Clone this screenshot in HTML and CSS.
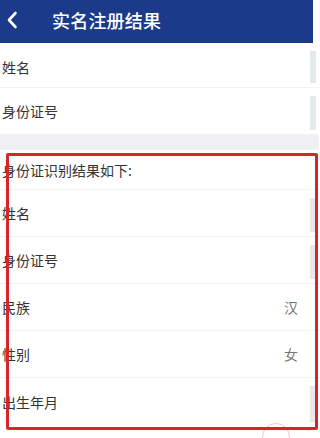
FILE: index.html
```html
<!DOCTYPE html>
<html lang="zh">
<head>
<meta charset="utf-8">
<link rel="stylesheet" href="styles.css">
</head>
<body>
<div class="page">
  <header class="bar">
    <svg class="back" width="12" height="18" viewBox="0 0 12 18"><path d="M9.5 2 L3 9 L9.5 16" fill="none" stroke="#fff" stroke-width="2.6" stroke-linecap="round" stroke-linejoin="round"/></svg>
    <span class="title">实名注册结果</span>
  </header>
  <div class="list top">
    <div class="row r1 edge"><span class="label">姓名</span></div>
    <div class="row r2 edge"><span class="label">身份证号</span></div>
  </div>
  <div class="gap"></div>
  <div class="list result">
    <div class="row head"><span class="label">身份证识别结果如下:</span></div>
    <div class="row edge"><span class="label">姓名</span></div>
    <div class="row edge"><span class="label">身份证号</span></div>
    <div class="row"><span class="label">民族</span><span class="value">汉</span></div>
    <div class="row"><span class="label">性别</span><span class="value">女</span></div>
    <div class="row last edge"><span class="label">出生年月</span></div>
  </div>
  <div class="mark"></div>
</div>
</body>
</html>
```

FILE: styles.css
```css
html, body {
  margin: 0;
  padding: 0;
  background: #ffffff;
}
.page {
  position: relative;
  width: 319px;
  height: 438px;
  overflow: hidden;
  font-family: "Noto Sans CJK SC", "Noto Sans", sans-serif;
  color: #333333;
  background: #ffffff;
}
.bar {
  width: 313px;
  height: 43px;
  background: #1b3a8a;
  display: flex;
  align-items: center;
  box-sizing: border-box;
  padding-left: 6px;
  padding-bottom: 4px;
}
.back {
  display: block;
}
.title {
  margin-left: 34px;
  color: #ffffff;
  font-size: 18px;
  font-weight: 500;
  letter-spacing: 0.2px;
}
.list {
  display: flex;
  flex-direction: column;
}
.row {
  position: relative;
  display: flex;
  align-items: center;
  justify-content: space-between;
  height: 46px;
  border-bottom: 1px solid #f1f2f3;
  padding: 0 21px 0 2px;
  font-size: 14px;
  background: #ffffff;
}
.row.edge::after {
  content: "";
  position: absolute;
  right: 3px;
  top: 8px;
  bottom: 4px;
  width: 6px;
  background: #e4e9ec;
}
.top .r1 {
  box-sizing: border-box;
  height: 45px;
  padding-top: 3px;
}
.top .r2 {
  height: 46px;
}
.gap {
  height: 15px;
  background: #eef0f1;
}
.row.head {
  height: 39px;
  border-bottom: 1px solid #f4f4f4;
}
.row.last {
  height: 48px;
  border-bottom: none;
}
.value {
  color: #777777;
  font-size: 14px;
}
.result::before {
  content: "";
  position: absolute;
  left: 6px;
  top: 153px;
  width: 306px;
  height: 271px;
  border: 3px solid #d6262c;
  border-radius: 2px;
  z-index: 2;
}
.mark {
  position: absolute;
  left: 262px;
  top: 423px;
  width: 26px;
  height: 26px;
  border: 1px solid #f2c6c9;
  border-radius: 50%;
  z-index: 1;
}
```
